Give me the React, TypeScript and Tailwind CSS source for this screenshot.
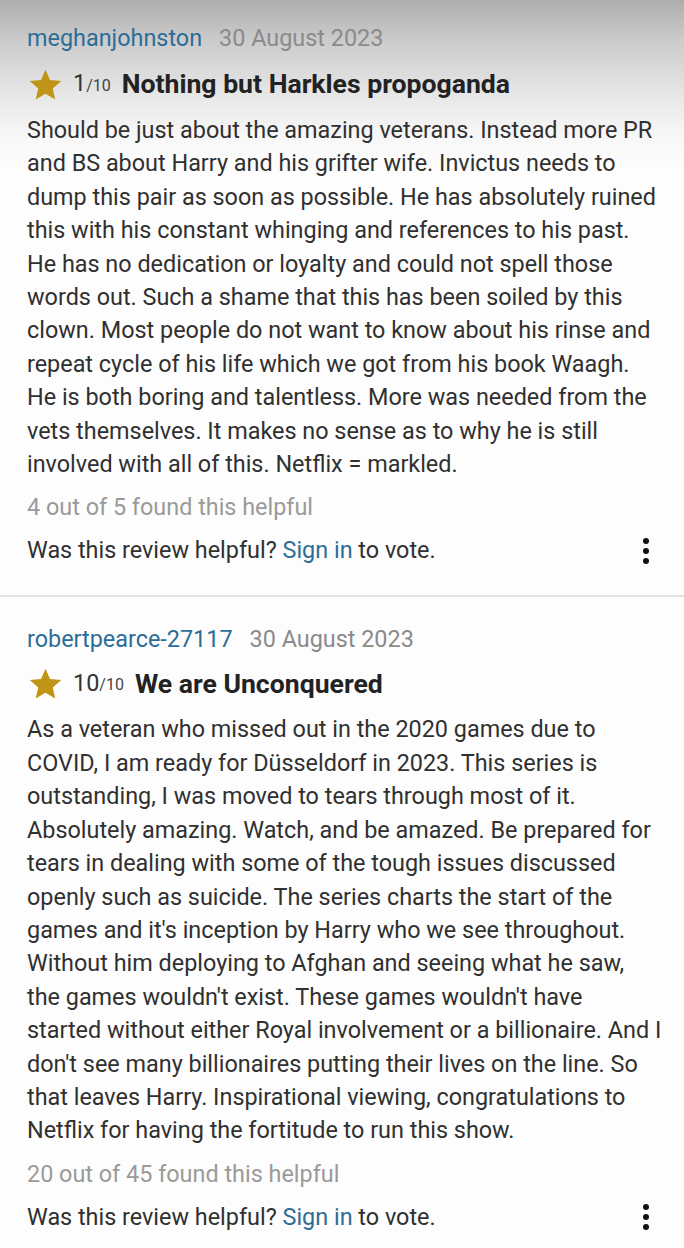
import React from 'react';

type Review = {
  user: string;
  date: string;
  rating: number;
  title: string;
  lines: string[];
  helpful: string;
};

// 画面に合わせて行ごとに改行
const reviews: Review[] = [
  {
    user: 'meghanjohnston',
    date: '30 August 2023',
    rating: 1,
    title: 'Nothing but Harkles propoganda',
    lines: [
      'Should be just about the amazing veterans. Instead more PR',
      'and BS about Harry and his grifter wife. Invictus needs to',
      'dump this pair as soon as possible. He has absolutely ruined',
      'this with his constant whinging and references to his past.',
      'He has no dedication or loyalty and could not spell those',
      'words out. Such a shame that this has been soiled by this',
      'clown. Most people do not want to know about his rinse and',
      'repeat cycle of his life which we got from his book Waagh.',
      'He is both boring and talentless. More was needed from the',
      'vets themselves. It makes no sense as to why he is still',
      'involved with all of this. Netflix = markled.',
    ],
    helpful: '4 out of 5 found this helpful',
  },
  {
    user: 'robertpearce-27117',
    date: '30 August 2023',
    rating: 10,
    title: 'We are Unconquered',
    lines: [
      'As a veteran who missed out in the 2020 games due to',
      'COVID, I am ready for Düsseldorf in 2023. This series is',
      'outstanding, I was moved to tears through most of it.',
      'Absolutely amazing. Watch, and be amazed. Be prepared for',
      'tears in dealing with some of the tough issues discussed',
      'openly such as suicide. The series charts the start of the',
      "games and it's inception by Harry who we see throughout.",
      'Without him deploying to Afghan and seeing what he saw,',
      "the games wouldn't exist. These games wouldn't have",
      'started without either Royal involvement or a billionaire. And I',
      "don't see many billionaires putting their lives on the line. So",
      'that leaves Harry. Inspirational viewing, congratulations to',
      'Netflix for having the fortitude to run this show.',
    ],
    helpful: '20 out of 45 found this helpful',
  },
];

function Star() {
  return (
    <svg viewBox="0 0 24 24" className="w-[35px] h-[35px] shrink-0">
      <path
        d="M12 1.8l3.1 7.1 7.7.7-5.8 5.1 1.7 7.6L12 18.3l-6.7 4 1.7-7.6-5.8-5.1 7.7-.7z"
        fill="#c09417"
      />
    </svg>
  );
}

function Kebab() {
  return (
    <div className="flex flex-col items-center gap-[4px] w-[8px]">
      <span className="w-[6px] h-[6px] rounded-full bg-[#111]" />
      <span className="w-[6px] h-[6px] rounded-full bg-[#111]" />
      <span className="w-[6px] h-[6px] rounded-full bg-[#111]" />
    </div>
  );
}

function ReviewItem({ r, first }: { r: Review; first: boolean }) {
  return (
    <div className={first ? 'px-[27px] pt-[24px] pb-[28px]' : 'px-[27px] pt-[28px] pb-[28px]'}>
      {/* ユーザー名と日付 */}
      <div className="flex items-center gap-[17px] text-[23.4px] leading-[28px]">
        <span className="text-[#2c6d97]">{r.user}</span>
        <span className="text-[#8a8a8a]">{r.date}</span>
      </div>
      {/* 評価とタイトル */}
      <div className={first ? 'flex items-center mt-[16px] h-[32px]' : 'flex items-center mt-[14px] h-[32px]'}>
        <div className="ml-[1px]">
          <Star />
        </div>
        <span className="ml-[10px] text-[23.4px] text-[#333]">{r.rating}</span>
        <span className="text-[16px] text-[#444] mt-[4px]">/10</span>
        <span className="ml-[11px] text-[26.6px] font-bold text-[#222]">{r.title}</span>
      </div>
      {/* 本文 */}
      <div className="mt-[14px] text-[23.4px] leading-[33.4px] text-[#303030]">
        {r.lines.map((l, i) => (
          <div key={i} className="whitespace-nowrap">
            {l}
          </div>
        ))}
      </div>
      <div className="mt-[10px] text-[23.4px] leading-[33px] text-[#9a9a9a]">{r.helpful}</div>
      <div className="mt-[10px] flex items-center justify-between text-[23.4px] leading-[33px] text-[#303030]">
        <span>
          Was this review helpful? <span className="text-[#2c6d97]">Sign in</span> to vote.
        </span>
        <div className="mr-[7px]">
          <Kebab />
        </div>
      </div>
    </div>
  );
}

export default function App() {
  return (
    <div
      className="w-[684px] h-[1248px] overflow-hidden bg-[linear-gradient(to_bottom,#aeaeae_0px,#cbcbcb_40px,#e7e7e7_95px,#f7f7f7_135px,#fdfdfd_170px)]"
      style={{ fontFamily: 'Roboto, "Noto Sans", sans-serif' }}
    >
      {reviews.map((r, i) => (
        <div key={r.user}>
          {i > 0 && <div className="h-[2px] bg-[#e2e2e2]" />}
          <ReviewItem r={r} first={i === 0} />
        </div>
      ))}
    </div>
  );
}
